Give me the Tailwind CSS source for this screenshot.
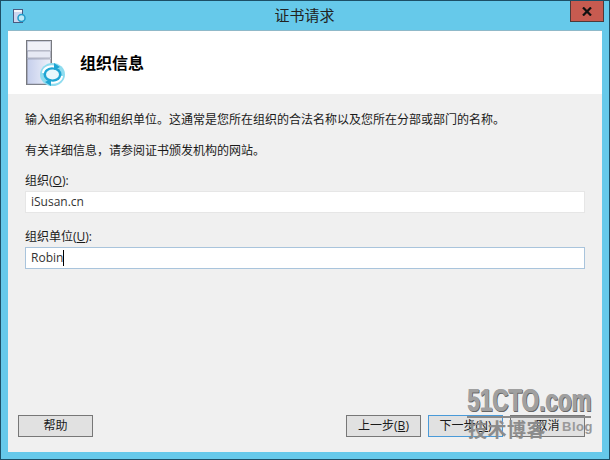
<!DOCTYPE html>
<html lang="zh-CN">
<head>
    <meta charset="UTF-8">
    <title>证书请求</title>
    <script src="https://cdn.jsdelivr.net/npm/@tailwindcss/browser@4"></script>
</head>
<body class="m-0 overflow-hidden">
    <div class="relative w-[610px] h-[460px] flex flex-col border border-[#1d4f66] bg-[#66c9ea] font-['Open_Sans','Noto_Sans_CJK_SC',sans-serif] text-[12px] text-[#1a1a1a]">
        <!-- title bar -->
        <div class="relative h-[29px] shrink-0 flex items-center justify-center text-[15px] text-[#222] pr-[1px]">
            <svg class="absolute left-[10px] top-[6px]" width="17" height="17" viewBox="0 0 17 17">
                <rect x="2.500" y="2.500" width="9" height="13" fill="#cdd6ef" stroke="#4a5a80"/>
                <rect x="3" y="3" width="8" height="2" fill="#f5f5fa"/>
                <circle cx="10.500" cy="11" r="3.500" fill="#bfe9f6" stroke="#1f9ac9" stroke-width="1.500"/>
            </svg>
            <span>证书请求</span>
            <div class="absolute right-[5px] top-0 w-[34px] h-[21px] bg-[#c75b50] border border-[#4d3a3a] border-t-0 flex items-center justify-center">
                <svg width="10" height="9" viewBox="0 0 10 9"><path d="M1 .5 9 8.500M9 .5 1 8.500" stroke="#111" stroke-width="2.200" fill="none"/></svg>
            </div>
        </div>

        <!-- client area -->
        <div class="mx-[7px] h-[422px] shrink-0 flex flex-col bg-[#f0f0f0]">
            <div class="h-[64px] shrink-0 bg-white flex items-center border-t border-[#8fb9c9]">
                <svg class="ml-[18px] mt-[2px]" width="40" height="48" viewBox="0 0 40 48">
                    <defs>
                        <linearGradient id="tower" x1="0" y1="0" x2="1" y2="0">
                            <stop offset="0" stop-color="#c6cfec"/>
                            <stop offset="1" stop-color="#eef1fa"/>
                        </linearGradient>
                    </defs>
                    <rect x="0.500" y="0.500" width="25" height="44" fill="url(#tower)" stroke="#77797f"/>
                    <rect x="1.500" y="1.500" width="23" height="9" fill="#f0f1f7" stroke="#b4b8c6" stroke-width="0.600"/>
                    <rect x="1.500" y="11" width="23" height="7" fill="#e6e9f4" stroke="#8c90a0" stroke-width="0.600"/>
                    <rect x="1.500" y="19" width="23" height="25" fill="url(#tower)" stroke="#8c90a0" stroke-width="0.600"/>
                    <ellipse cx="26.500" cy="34.500" rx="12.500" ry="11.500" fill="#8fdcef"/>
                    <ellipse cx="26.500" cy="34.500" rx="9" ry="7.500" fill="#1fa5d3"/>
                    <ellipse cx="26.500" cy="34.500" rx="6.500" ry="5" fill="#e8f8fc"/>
                    <path d="M17 33a9 7 0 0 1 13-6" fill="none" stroke="#fff" stroke-width="2"/>
                    <path d="M36 36a9 7 0 0 1-13 6" fill="none" stroke="#fff" stroke-width="2"/>
                    <path d="M28 23l6 4-6 3zM25 46l-6-4 6-3z" fill="#1fa5d3"/>
                </svg>
                <h1 class="ml-[14px] text-[16px] font-bold text-black">组织信息</h1>
            </div>

            <div class="flex-1 flex flex-col px-[17px]">
                <p class="mt-[16px] leading-[20px]">输入组织名称和组织单位。这通常是您所在组织的合法名称以及您所在分部或部门的名称。</p>
                <p class="mt-[11px] leading-[20px]">有关详细信息，请参阅证书颁发机构的网站。</p>

                <label class="mt-[11px] leading-[18px]">组织(<span class="underline">O</span>):</label>
                <div class="mt-[1px] w-[560px] h-[22px] bg-white border border-[#e6e6e6] flex items-center pl-[5px] text-[12px] text-[#333]">iSusan.cn</div>

                <label class="mt-[15px] leading-[18px]">组织单位(<span class="underline">U</span>):</label>
                <div class="mt-[1px] w-[560px] h-[22px] bg-white border border-[#a9c4dc] flex items-center pl-[5px] text-[12px] text-[#333]">Robin<span class="inline-block w-[1px] h-[16px] bg-black"></span></div>

                <div class="mt-auto mb-[15px] flex items-center">
                    <button class="w-[75px] h-[22px] bg-[#e1e1e1] border border-[#777] text-[12px] ml-[-7px]">帮助</button>
                    <button class="ml-auto w-[75px] h-[22px] bg-[#e1e1e1] border border-[#777] text-[12px]">上一步(<span class="underline">B</span>)</button>
                    <button class="ml-[7px] w-[75px] h-[22px] bg-[#e1e1e1] border border-[#4a9ad8] text-[12px]">下一步(<span class="underline">N</span>)</button>
                    <button class="ml-[7px] w-[75px] h-[22px] bg-[#e1e1e1] border border-[#777] text-[12px]">取消</button>
                </div>
            </div>
        </div>

        <!-- watermark -->
        <div class="absolute left-[466px] top-[385px] w-[130px] h-[60px] text-[#a0a0a0] font-['Liberation_Sans','Noto_Sans_CJK_SC',sans-serif]">
            <div class="text-[32px] leading-[29px] font-bold whitespace-nowrap scale-x-[0.7] origin-left [text-shadow:1px_0_0_#a0a0a0,1px_1px_0_#666,2px_1px_0_#666]">51CTO.com</div>
            <div class="h-[2px] w-[124px] bg-[#8a8a8a] mt-[1px]"></div>
            <div class="flex items-start whitespace-nowrap mt-[1px] pl-[1px]">
                <span class="text-[19px] leading-[24px] font-bold tracking-[0.500px] text-[#8c8c8c]">技术博客</span>
                <span class="text-[13px] leading-[16px] font-bold ml-[16px] tracking-[0.500px] text-[#999]">Blog</span>
            </div>
        </div>
    </div>
</body>
</html>
